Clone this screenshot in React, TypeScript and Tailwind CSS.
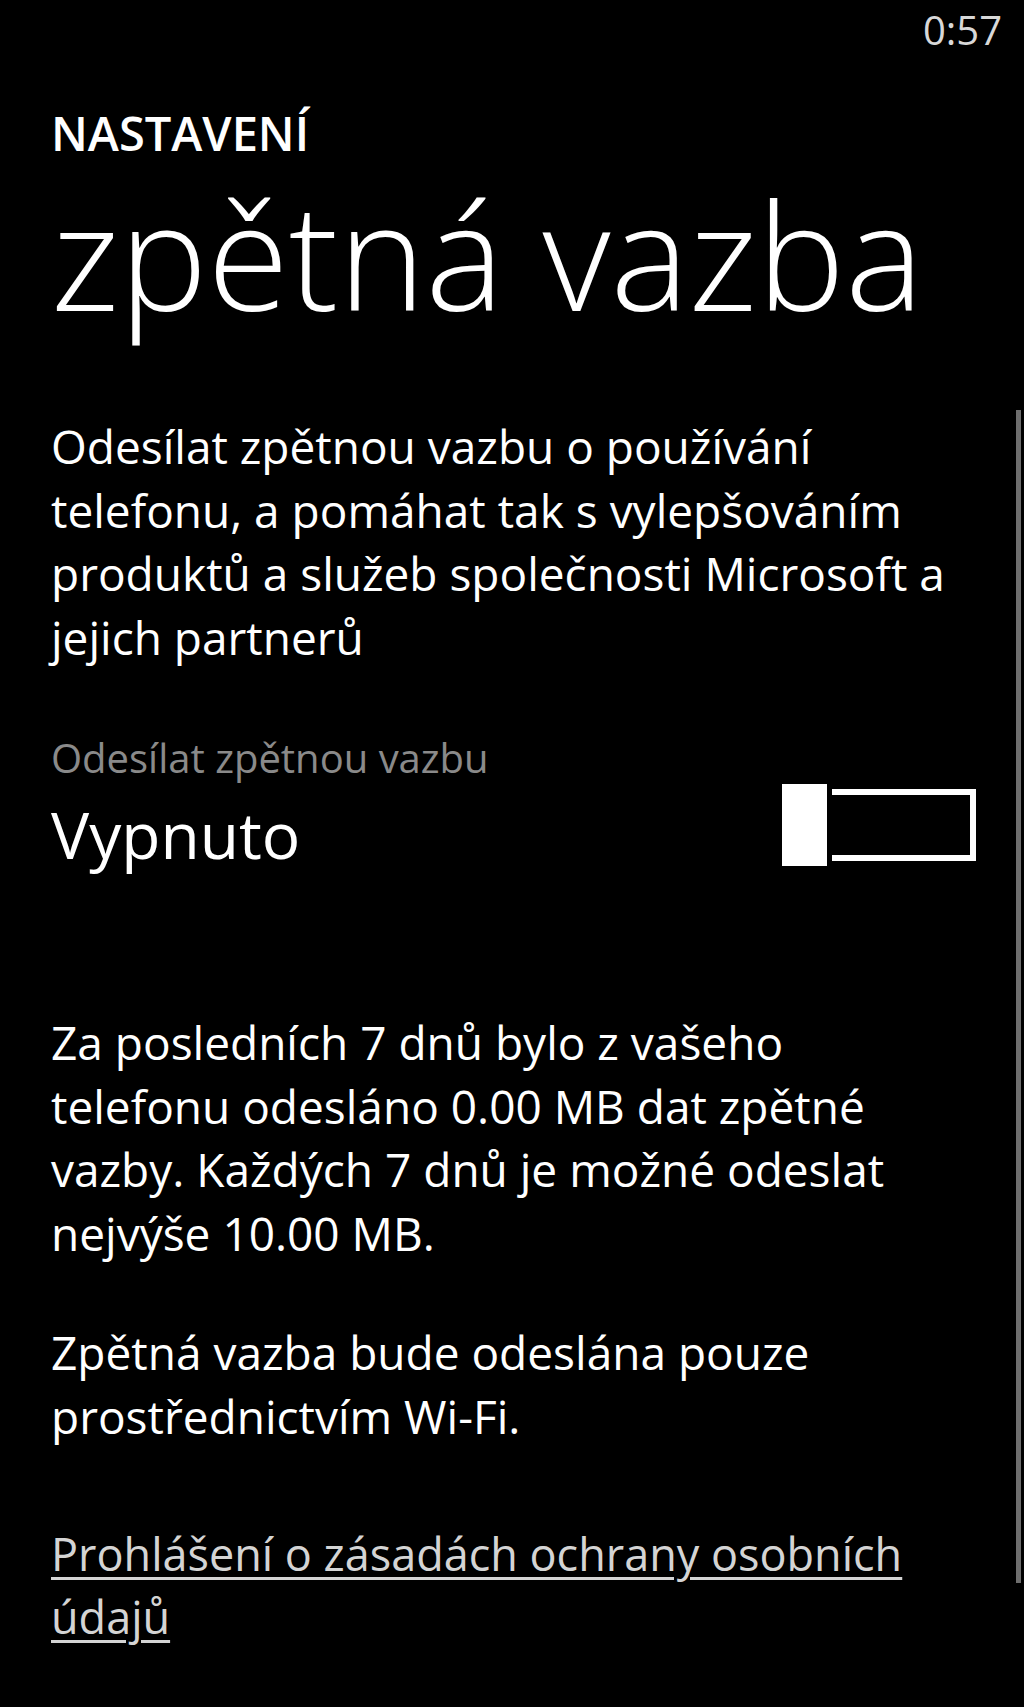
const Toggle = () => {
  return (
    <div className="flex items-center gap-[5px] mb-[5px]">
      <div className="w-[45px] h-[82px] bg-white" />
      <div className="w-[144px] h-[72px] border-[6px] border-l-0 border-white" />
    </div>
  );
};

const App = () => {
  return (
    <div className="relative min-h-[1707px] bg-black text-white font-['Open_Sans',sans-serif] overflow-hidden">
      {/* scroll indicator */}
      <div className="absolute right-[3px] top-[410px] h-[1173px] w-[5px] bg-[#6e6e6e]" />

      <div className="flex justify-end pt-[10px] pr-[22px]">
        <span className="text-[40px] leading-[40px] text-[#d8d8d8]">0:57</span>
      </div>

      <div className="pl-[51px] pr-[48px]">
        <h5 className="mt-[60px] text-[47px] leading-[47px] font-semibold">NASTAVENÍ</h5>
        <h1 className="mt-[23px] text-[148px] leading-[148px] font-light whitespace-nowrap">zpětná vazba</h1>

        <p className="mt-[87px] text-[46px] leading-[63.5px] whitespace-nowrap">
          Odesílat zpětnou vazbu o používání
          <br />
          telefonu, a pomáhat tak s vylepšováním
          <br />
          produktů a služeb společnosti Microsoft a
          <br />
          jejich partnerů
        </p>

        <div className="flex items-end justify-between mt-[67px]">
          <div className="flex flex-col">
            <span className="text-[40px] leading-[44px] text-[#8a8a8a]">Odesílat zpětnou vazbu</span>
            <span className="mt-[19px] text-[64px] leading-[72px]">Vypnuto</span>
          </div>
          <Toggle />
        </div>

        <p className="mt-[140px] text-[46px] leading-[63.5px] whitespace-nowrap">
          Za posledních 7 dnů bylo z vašeho
          <br />
          telefonu odesláno 0.00 MB dat zpětné
          <br />
          vazby. Každých 7 dnů je možné odeslat
          <br />
          nejvýše 10.00 MB.
        </p>

        <p className="mt-[56px] text-[46px] leading-[63.5px] whitespace-nowrap">
          Zpětná vazba bude odeslána pouze
          <br />
          prostřednictvím Wi-Fi.
        </p>

        <p className="mt-[74px] text-[45px] leading-[63px] whitespace-nowrap text-[#d4d4d4] underline decoration-[3px] underline-offset-[6px]">
          Prohlášení o zásadách ochrany osobních
          <br />
          údajů
        </p>
      </div>
    </div>
  );
};

export default App;
